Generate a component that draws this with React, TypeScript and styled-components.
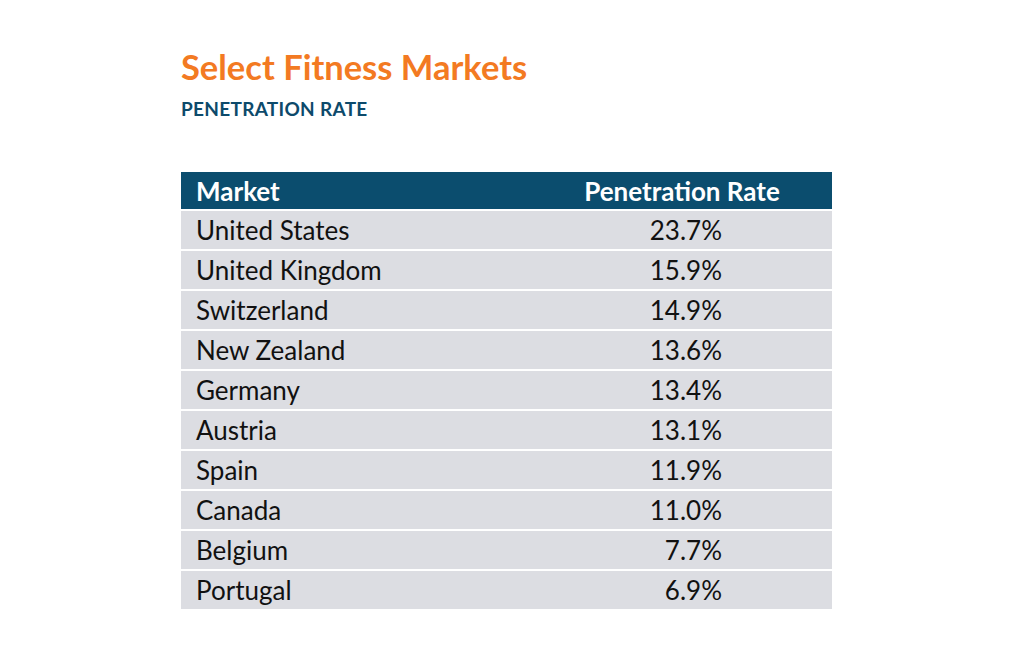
import React from "react";
import styled, { createGlobalStyle } from "styled-components";

const GlobalStyle = createGlobalStyle`
  body {
    margin: 0;
    background: #ffffff;
    font-family: Lato, "Open Sans", sans-serif;
  }
`;

const Page = styled.div`
  padding: 46px 0 0 181px;
`;

const Title = styled.h1`
  margin: 0;
  font-size: 34.5px;
  font-weight: 700;
  line-height: 42px;
  color: #f37a22;
`;

const Subtitle = styled.h2`
  margin: 9px 0 0;
  font-size: 19px;
  font-weight: 700;
  line-height: 24px;
  letter-spacing: 0.3px;
  color: #0d4a6b;
`;

const Table = styled.div`
  margin-top: 51px;
  width: 651px;
  display: flex;
  flex-direction: column;
  gap: 2px;
`;

const Row = styled.div<{ $head?: boolean }>`
  display: grid;
  grid-template-columns: 1fr 300px;
  align-items: center;
  height: ${(p) => (p.$head ? 37 : 38)}px;
  padding-left: 15px;
  background: ${(p) => (p.$head ? "#0b4d6e" : "#dcdde2")};
  color: ${(p) => (p.$head ? "#ffffff" : "#111111")};
  font-size: 26px;
  font-weight: ${(p) => (p.$head ? 700 : 400)};
  line-height: 30px;
`;

const HeadRate = styled.div`
  text-align: center;
`;

const Rate = styled.div`
  text-align: right;
  padding-right: 110px;
`;

const markets: [string, string][] = [
  ["United States", "23.7%"],
  ["United Kingdom", "15.9%"],
  ["Switzerland", "14.9%"],
  ["New Zealand", "13.6%"],
  ["Germany", "13.4%"],
  ["Austria", "13.1%"],
  ["Spain", "11.9%"],
  ["Canada", "11.0%"],
  ["Belgium", "7.7%"],
  ["Portugal", "6.9%"],
];

export default function App() {
  return (
    <>
      <GlobalStyle />
      <Page>
        <Title>Select Fitness Markets</Title>
        <Subtitle>PENETRATION RATE</Subtitle>
        <Table>
          <Row $head>
            <div>Market</div>
            <HeadRate>Penetration Rate</HeadRate>
          </Row>
          {markets.map(([name, rate]) => (
            <Row key={name}>
              <div>{name}</div>
              <Rate>{rate}</Rate>
            </Row>
          ))}
        </Table>
      </Page>
    </>
  );
}
